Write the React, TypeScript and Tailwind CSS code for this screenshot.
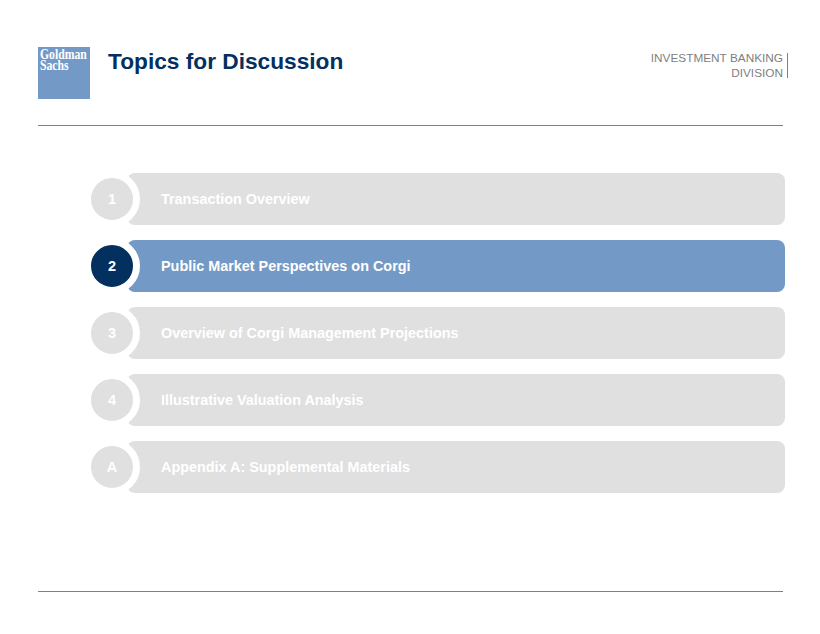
const items = [
  { label: "1", title: "Transaction Overview" },
  { label: "2", title: "Public Market Perspectives on Corgi", active: true },
  { label: "3", title: "Overview of Corgi Management Projections" },
  { label: "4", title: "Illustrative Valuation Analysis" },
  { label: "A", title: "Appendix A: Supplemental Materials" },
]

function Row({ label, title, active }: { label: string; title: string; active?: boolean }) {
  return (
    <div className="flex h-[52px] items-center">
      {/* number badge, its white ring cuts into the bar */}
      <div
        className={
          active
            ? "relative z-10 flex h-[56px] w-[56px] shrink-0 items-center justify-center rounded-full border-[7px] border-white bg-[#03305f] pt-[2px] text-[14.5px] font-bold text-white"
            : "relative z-10 flex h-[56px] w-[56px] shrink-0 items-center justify-center rounded-full border-[7px] border-white bg-[#e0e0e0] pt-[2px] text-[14.5px] font-bold text-white"
        }
      >
        {label}
      </div>
      <div
        className={
          active
            ? "-ml-[13px] flex h-full flex-1 items-center rounded-[8px] bg-[#7399c6] pl-[34px] pt-[2px] text-[14.4px] font-bold text-white"
            : "-ml-[13px] flex h-full flex-1 items-center rounded-[8px] bg-[#e0e0e0] pl-[34px] pt-[2px] text-[14.4px] font-bold text-white"
        }
      >
        {title}
      </div>
    </div>
  )
}

export default function App() {
  return (
    <div className="h-[634px] w-[820px] bg-white pl-[38px] pr-[37px] pt-[47px] font-['Liberation_Sans',Arial,sans-serif]">
      {/* HEADER */}
      <div className="flex h-[79px] items-start border-b border-[#808080]">
        <div className="h-[52px] w-[52px] shrink-0 overflow-hidden bg-[#7399c6] pl-[2px] pt-[2px] font-['Liberation_Serif',serif] text-[15px] font-bold leading-[11px] text-white">
          <div className="origin-left scale-x-[0.78]">Goldman</div>
          <div className="origin-left scale-x-[0.78]">Sachs</div>
        </div>
        <h1 className="ml-[18px] text-[22.7px] font-bold leading-[28px] text-[#03305f]">Topics for Discussion</h1>
        <div className="ml-auto mt-[4px] -mr-[5px] flex items-start">
          <div className="text-right text-[11.8px] font-normal leading-[15px] text-[#808080]">
            <div>INVESTMENT BANKING</div>
            <div>DIVISION</div>
          </div>
          <div className="ml-[4px] mt-[2px] h-[25px] w-px bg-[#808080]" />
        </div>
      </div>

      {/* AGENDA */}
      <div className="ml-[46px] -mr-[2px] mt-[47px] flex h-[418px] flex-col gap-[15px]">
        {items.map((it) => (
          <Row key={it.label} label={it.label} title={it.title} active={it.active} />
        ))}
      </div>

      <div className="h-px bg-[#808080]" />
    </div>
  )
}
